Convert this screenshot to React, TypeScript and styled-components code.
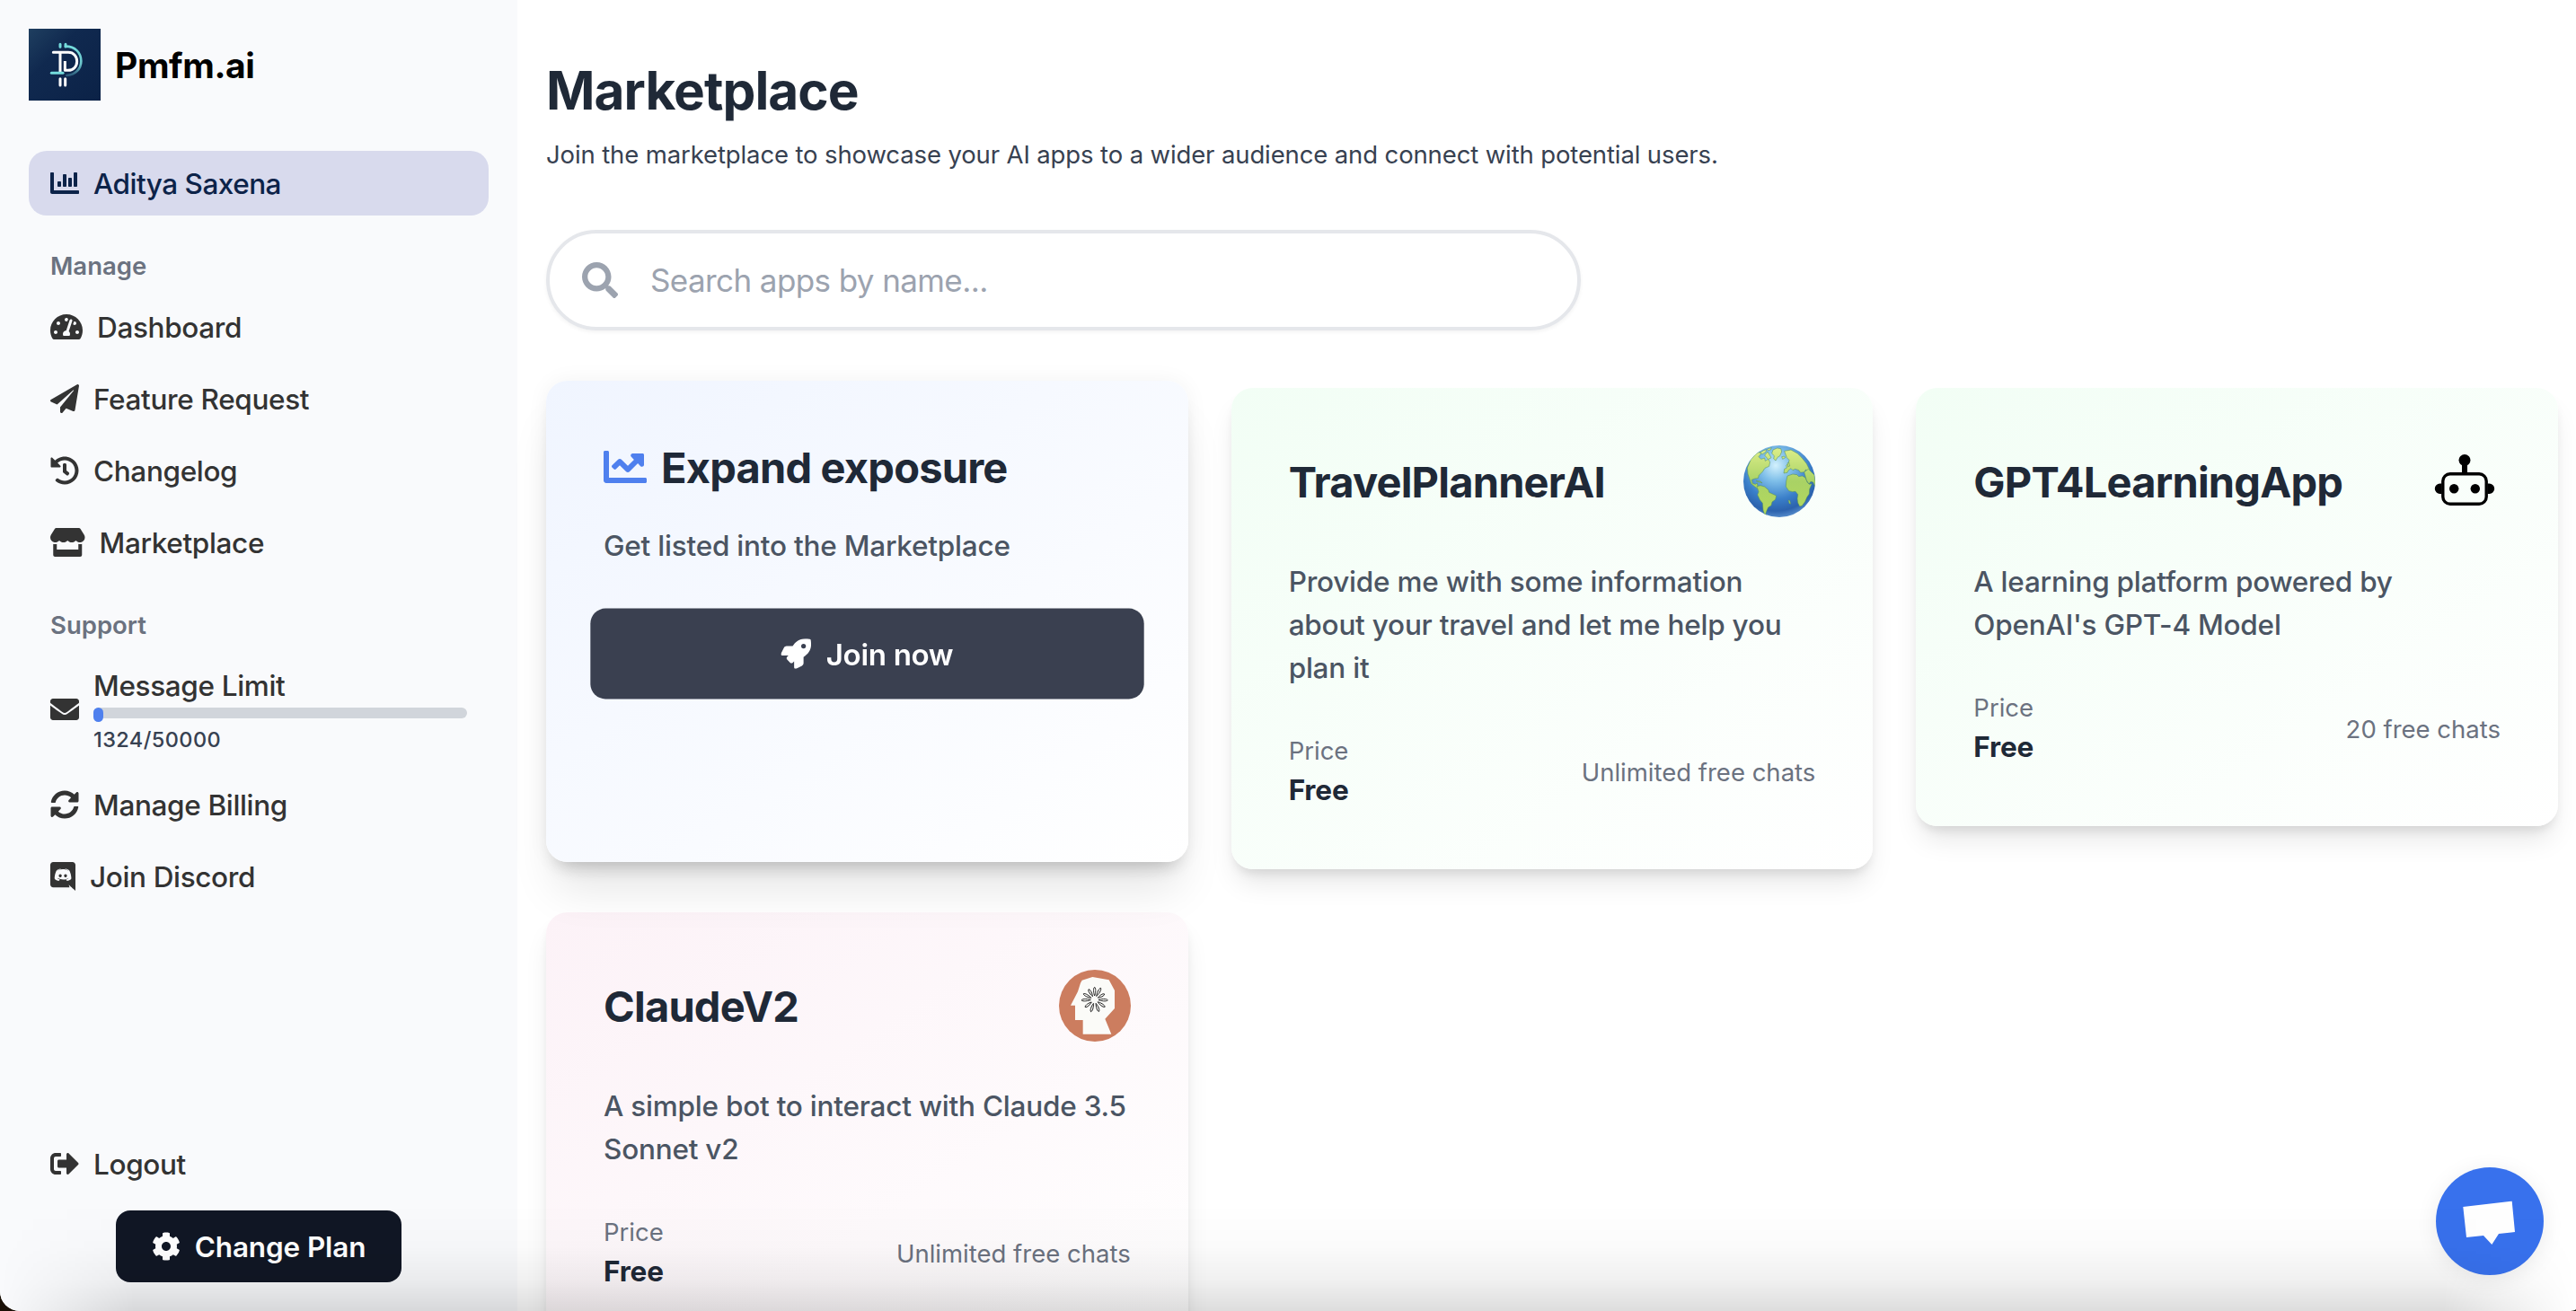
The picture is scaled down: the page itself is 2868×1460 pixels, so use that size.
import React from 'react';
import styled, { createGlobalStyle, css } from 'styled-components';
import {
  FaChartBar,
  FaChartLine,
  FaCog,
  FaEnvelope,
  FaHistory,
  FaPaperPlane,
  FaRocket,
  FaSearch,
  FaSignOutAlt,
  FaStore,
  FaSyncAlt,
  FaTachometerAlt,
} from 'react-icons/fa';

const GlobalStyle = createGlobalStyle`
  * {
    box-sizing: border-box;
  }
  body {
    margin: 0;
    background: #1a1006;
    font-family: Inter, 'Liberation Sans', sans-serif;
    -webkit-font-smoothing: antialiased;
  }
  h1, h2, p {
    margin: 0;
  }
  svg {
    display: block;
    flex-shrink: 0;
  }
`;

const Window = styled.div`
  position: relative;
  display: flex;
  width: 2868px;
  height: 1460px;
  overflow: hidden;
  background: #fff;
  border-radius: 0 0 10px 22px / 0 0 2px 22px;
`;

const Sidebar = styled.aside`
  display: flex;
  flex-direction: column;
  width: 576px;
  flex-shrink: 0;
  padding: 32px;
  background: #f9fafc;
`;

const Brand = styled.div`
  display: flex;
  align-items: center;
  gap: 16px;
  height: 80px;
  margin-bottom: 56px;
`;

const BrandName = styled.p`
  font-size: 39px;
  font-weight: 700;
  letter-spacing: -0.01em;
  color: #000;
`;

const itemText = css`
  font-size: 31.5px;
  font-weight: 500;
  letter-spacing: -0.011em;
`;

const Account = styled.div`
  display: flex;
  align-items: center;
  gap: 16px;
  height: 72px;
  padding: 0 24px;
  border-radius: 20px;
  background: #d8daed;
  color: #0c2349;
  ${itemText}
  letter-spacing: -0.016em;
`;

const GroupLabel = styled.p<{ $top: number }>`
  height: 40px;
  margin-top: ${(props) => props.$top}px;
  margin-bottom: 8px;
  padding-left: 24px;
  line-height: 40px;
  font-size: 27.5px;
  font-weight: 600;
  color: #6b7280;
`;

const MenuItem = styled.div<{ $height?: number }>`
  display: flex;
  align-items: center;
  gap: 16px;
  height: ${(props) => props.$height || 80}px;
  padding: 0 24px;
  color: #333;
  ${itemText}
`;

// these two glyphs are wider than they are tall
const DashboardIcon = styled(FaTachometerAlt)`
  width: 36px;
  height: 32px;
`;

const StoreIcon = styled(FaStore)`
  width: 38.5px;
  height: 32px;
`;

const Limit = styled.div`
  flex: 1;
`;

const LimitTitle = styled.p`
  line-height: 48px;
`;

const Track = styled.div`
  height: 12px;
  margin-bottom: 8px;
  border-radius: 6px;
  background: #d1d5db;
`;

const Fill = styled.div`
  height: 16px;
  border-radius: 6px;
  background: #4f80ee;
`;

const LimitCount = styled.p`
  line-height: 32px;
  font-size: 23.5px;
  letter-spacing: 0.018em;
  color: #374151;
`;

const SidebarFooter = styled.div`
  display: flex;
  flex-direction: column;
  margin-top: auto;
`;

const PlanButton = styled.button`
  display: flex;
  align-items: center;
  align-self: center;
  justify-content: center;
  gap: 16px;
  width: 318px;
  height: 80px;
  margin-top: 12px;
  border: 0;
  border-radius: 16px;
  background: #111725;
  color: #fff;
  font-family: inherit;
  font-size: 31.5px;
  font-weight: 600;
  letter-spacing: -0.004em;
  white-space: nowrap;
`;

const Main = styled.main`
  flex: 1;
  padding: 64px 20px 0 32px;
`;

const Title = styled.h1`
  height: 76px;
  line-height: 74px;
  font-size: 58.5px;
  font-weight: 700;
  letter-spacing: -0.016em;
  color: #1f2937;
`;

const Subtitle = styled.p`
  height: 64px;
  line-height: 64px;
  font-size: 27.5px;
  letter-spacing: -0.0045em;
  color: #374151;
`;

const SearchBox = styled.div`
  display: flex;
  align-items: center;
  gap: 36px;
  width: 1152px;
  height: 112px;
  margin: 52px 0 64px;
  padding-left: 36px;
  border: 4px solid #e5e7eb;
  border-radius: 56px;
  box-shadow: 0 2px 4px rgba(0, 0, 0, 0.05);
  color: #9ca3af;
`;

const SearchInput = styled.input`
  flex: 1;
  min-width: 0;
  padding: 0;
  border: 0;
  outline: 0;
  background: none;
  font-family: inherit;
  font-size: 35px;
  letter-spacing: -0.017em;
  &::placeholder {
    color: #9ca3af;
    opacity: 1;
  }
`;

const Grid = styled.div`
  display: grid;
  grid-template-columns: repeat(3, 1fr);
  gap: 48px;
`;

const Card = styled.section<{ $tint: string }>`
  align-self: start;
  padding: 64px;
  border-radius: 24px;
  background: linear-gradient(to bottom right, ${(props) => props.$tint}, #fff);
  box-shadow: 0 20px 30px -6px rgba(0, 0, 0, 0.1),
    0 8px 12px -4px rgba(0, 0, 0, 0.1);
`;

const PromoCard = styled(Card)`
  align-self: stretch;
  transform: translateY(-8px);
  box-shadow: 0 40px 50px -10px rgba(0, 0, 0, 0.1),
    0 16px 20px -12px rgba(0, 0, 0, 0.2), 0 0 24px rgba(0, 0, 0, 0.05);
`;

const PromoHeader = styled.div`
  display: flex;
  align-items: center;
  gap: 16px;
  height: 64px;
  margin-bottom: 32px;
  color: #4f80ee;
`;

const CardTitle = styled.h2`
  font-size: 47px;
  font-weight: 700;
  letter-spacing: -0.017em;
  white-space: nowrap;
  color: #1f2937;
`;

const Description = styled.p`
  line-height: 48px;
  font-size: 31.5px;
  font-weight: 500;
  letter-spacing: -0.007em;
  color: #4b5563;
`;

const JoinButton = styled.button`
  display: flex;
  align-items: center;
  justify-content: center;
  gap: 16px;
  width: 100%;
  height: 96px;
  margin-top: 48px;
  border: 0;
  border-radius: 16px;
  background: #3a4050;
  color: #fff;
  font-family: inherit;
  font-size: 31.5px;
  font-weight: 600;
  letter-spacing: -0.01em;
  transform: scale(1.05);
`;

const CardHeader = styled.div`
  display: flex;
  align-items: center;
  justify-content: space-between;
  height: 80px;
  margin-bottom: 48px;
`;

const CardFooter = styled.div`
  display: flex;
  align-items: center;
  justify-content: space-between;
  height: 88px;
  margin-top: 48px;
`;

const Muted = styled.p`
  line-height: 40px;
  font-size: 27.5px;
  color: #6b7280;
`;

const Price = styled.p`
  line-height: 48px;
  font-size: 31.5px;
  font-weight: 700;
  letter-spacing: -0.005em;
  color: #1f2937;
`;

const BottomShade = styled.div`
  position: absolute;
  left: 0;
  right: 0;
  bottom: 0;
  height: 120px;
  pointer-events: none;
  background: linear-gradient(
    to bottom,
    rgba(0, 0, 0, 0),
    rgba(0, 0, 0, 0.015) 40%,
    rgba(0, 0, 0, 0.06) 72%,
    rgba(0, 0, 0, 0.135)
  );
  mask-image: linear-gradient(
    to right,
    transparent,
    #000 150px,
    #000 2720px,
    transparent
  );
`;

const ChatButton = styled.button`
  position: absolute;
  right: 36px;
  bottom: 40px;
  width: 120px;
  height: 120px;
  padding: 0;
  border: 0;
  border-radius: 50%;
  background: #3871ed;
  box-shadow: 0 4px 24px rgba(0, 0, 0, 0.08);
`;

const Logo = () => (
  <svg width="80" height="80" viewBox="18 18 240 240" fill="none">
    <defs>
      <linearGradient id="logoBg" x1="0" y1="0" x2="1" y2="1">
        <stop offset="0" stopColor="#1f3f60" />
        <stop offset="0.35" stopColor="#10294f" />
        <stop offset="1" stopColor="#0b2247" />
      </linearGradient>
      <linearGradient id="logoArc" x1="0" y1="0" x2="0" y2="1">
        <stop offset="0" stopColor="#74dcdc" />
        <stop offset="0.6" stopColor="#6cc6cc" />
        <stop offset="1" stopColor="#2b5a7a" />
      </linearGradient>
    </defs>
    <rect x="18" y="18" width="240" height="240" fill="url(#logoBg)" />
    <g strokeLinecap="round" strokeWidth="9">
      <path d="M123 70v9M141 70v8" stroke="#74dcdc" />
      <path
        d="M141 77c32 0 52 21 52 49 0 27-20 46-48 48"
        stroke="url(#logoArc)"
        strokeWidth="8"
      />
      <path d="M100 97h50c18 0 29 13 29 30s-12 30-29 30h-11" stroke="#fff" />
      <path d="M123 99v63M139 126v31" stroke="#fff" strokeLinecap="butt" />
      <path d="M123 185v22M140 185v22" stroke="#fff" />
      <path d="M94 166h38" stroke="#74dcdc" />
    </g>
  </svg>
);

const DiscordIcon = () => (
  <svg width="28" height="32" viewBox="0 0 448 512" fill="currentColor">
    <path d="M297.216 243.2c0 15.616-11.52 28.416-26.112 28.416-14.336 0-26.112-12.8-26.112-28.416s11.52-28.416 26.112-28.416c14.592 0 26.112 12.8 26.112 28.416zm-119.552-28.416c-14.592 0-26.112 12.8-26.112 28.416s11.776 28.416 26.112 28.416c14.592 0 26.112-12.8 26.112-28.416.256-15.616-11.52-28.416-26.112-28.416zM448 52.736V512c-64.494-56.994-43.868-38.128-118.784-107.776l13.568 47.36H52.48C23.552 451.584 0 428.032 0 398.848V52.736C0 23.552 23.552 0 52.48 0h343.04C424.448 0 448 23.552 448 52.736zm-72.96 242.688c0-82.432-36.864-149.248-36.864-149.248-36.864-27.648-71.936-26.88-71.936-26.88l-3.584 4.096c43.52 13.312 63.744 32.512 63.744 32.512-60.811-33.329-132.244-33.335-191.232-7.424-9.472 4.352-15.104 7.424-15.104 7.424s21.248-20.224 67.328-33.536l-2.56-3.072s-35.072-.768-71.936 26.88c0 0-36.864 66.816-36.864 149.248 0 0 21.504 37.12 78.08 38.912 0 0 9.472-11.52 17.152-21.248-32.512-9.728-44.8-30.208-44.8-30.208 3.766 2.636 9.976 6.053 10.496 6.4 43.21 24.198 104.588 32.126 159.744 8.96 8.96-3.328 18.944-8.192 29.44-15.104 0 0-12.8 20.992-46.336 30.464 7.68 9.728 16.896 20.736 16.896 20.736 56.576-1.792 78.336-38.912 78.336-38.912z" />
  </svg>
);

const GlobeIcon = () => (
  <svg width="80" height="80" viewBox="33 33 240 240">
    <defs>
      <radialGradient id="ocean" cx="0.45" cy="0.28" r="0.72">
        <stop offset="0" stopColor="#d3f1fd" />
        <stop offset="0.3" stopColor="#7fbfe9" />
        <stop offset="0.65" stopColor="#3a7fc9" />
        <stop offset="0.88" stopColor="#2c62ad" />
        <stop offset="1" stopColor="#5288c8" />
      </radialGradient>
      <linearGradient id="land" x1="0" y1="33" x2="0" y2="273" gradientUnits="userSpaceOnUse">
        <stop offset="0" stopColor="#e0f08c" />
        <stop offset="0.5" stopColor="#a9d265" />
        <stop offset="1" stopColor="#b5d95c" />
      </linearGradient>
      <clipPath id="globeClip">
        <circle cx="153" cy="153" r="120" />
      </clipPath>
    </defs>
    <circle cx="153" cy="153" r="120" fill="url(#ocean)" />
    <g
      clipPath="url(#globeClip)"
      fill="url(#land)"
      stroke="#4f8a5c"
      strokeWidth="1.5"
      strokeLinejoin="round"
    >
      <path d="M46 108l12-28 18-20 12-5 4 6-8 10 8 8 12-4 2 10 10-6 6 10-3 14-14 6-8 12-12 12-3 10-10 1-11 4 3 12 9 3 6-4 2 10 10 8-9 2-12-9-11-9-6-18-5-14z" />
      <path d="M88 58l12-8 10-3-2 8-11 7zM104 66l10-12 6 10 6 10-10 6zM113 45l14-4-4 7-8 2z" />
      <path d="M132 48l14-6 12 2 3 10-6 14-8 5-6 11-7-6 2-10-8-8z" />
      <path d="M161 71l9-2 3 5-9 5z" />
      <path d="M78 170l12-3 14 4 13 11 2 8 24 11-3 13-11 8-3 12-10 6-5 11-4 11 7 8-9-4-6-16-2-24-9-11-8-17 4-10z" />
      <path d="M76 151l14 2 6 6-8-3-12-3z" />
      <path d="M170 52l22-4 22 12 14 14 16 20 12 24-6 4-8-8-6 8-12 2-6-8-12-4-8 4-6-6-8 6-4 8-12 2 2-14 8-4-2-8 8-8 2-10-8-8z" />
      <path d="M180 92l5-2 3 12-6 2z" />
      <path d="M180 135l18-6 14 2 6 6 12-2 10 6 6 14 7 8 9-2-8 18-1 16-8 12-6 14-10 14-8 2-6-12-2-14 2-14-8-10-10 1-12-3-10-14 1-18z" />
      <path d="M236 122l14-10 20 20 5 30-3 8-6-14-8-2-6 8-8-12z" />
      <path d="M183 216l5 1 3 12-5-2z" />
    </g>
  </svg>
);

const RobotIcon = () => (
  <svg width="80" height="80" viewBox="0 0 80 80">
    <circle cx="40" cy="16.5" r="6.5" />
    <rect x="37" y="18" width="6" height="14" />
    <rect x="15.8" y="31.8" width="48.4" height="33.4" rx="8" fill="none" stroke="#000" strokeWidth="3.4" />
    <circle cx="28.2" cy="48.2" r="5.2" />
    <circle cx="51.8" cy="48.2" r="5.2" />
    <path d="M14.5 42.5h-2a5.7 5.7 0 0 0 0 11.4h2zM65.5 42.5h2a5.7 5.7 0 0 1 0 11.4h-2z" />
  </svg>
);

// petal angle and length around the centre of the head
const PETALS = [
  [0, 42],
  [28, 44],
  [60, 38],
  [92, 44],
  [125, 42],
  [160, 42],
  [197, 42],
  [232, 40],
  [268, 44],
  [298, 42],
  [330, 40],
];

const HeadIcon = () => (
  <svg width="80" height="80" viewBox="33 36 240 240">
    <circle cx="153" cy="156" r="120" fill="#cc7d5f" />
    <path
      d="M110 71l35-11 55 10 19 35v60l-32 35 21 51h-95v-47H87v-49H72l24-46 9-29z"
      fill="#fbfbf8"
    />
    <g fill="none" stroke="#111" strokeWidth="2.6">
      {PETALS.map(([angle, length]) => (
        <path
          key={angle}
          d={`M0 -13C-3 -20 -6 ${4 - length} 0 ${-length}C6 ${4 - length} 3 -20 0 -13Z`}
          transform={`translate(152 136) rotate(${angle})`}
        />
      ))}
    </g>
  </svg>
);

const MANAGE = [
  { label: 'Dashboard', icon: <DashboardIcon /> },
  { label: 'Feature Request', icon: <FaPaperPlane size={32} /> },
  { label: 'Changelog', icon: <FaHistory size={32} /> },
  { label: 'Marketplace', icon: <StoreIcon /> },
];

interface AppItem {
  name: string;
  description: string;
  chats: string;
  tint: string;
  icon: React.ReactNode;
}

const APPS: AppItem[] = [
  {
    name: 'TravelPlannerAI',
    description:
      'Provide me with some information about your travel and let me help you plan it',
    chats: 'Unlimited free chats',
    tint: '#f2fef5',
    icon: <GlobeIcon />,
  },
  {
    name: 'GPT4LearningApp',
    description: "A learning platform powered by OpenAI's GPT-4 Model",
    chats: '20 free chats',
    tint: '#f2fef5',
    icon: <RobotIcon />,
  },
  {
    name: 'ClaudeV2',
    description: 'A simple bot to interact with Claude 3.5 Sonnet v2',
    chats: 'Unlimited free chats',
    tint: '#fcf2f7',
    icon: <HeadIcon />,
  },
];

const used = 1324;
const total = 50000;

const App = () => {
  return (
    <>
      <GlobalStyle />
      <Window>
        <Sidebar>
          <Brand>
            <Logo />
            <BrandName>Pmfm.ai</BrandName>
          </Brand>
          <Account>
            <FaChartBar size={32} />
            Aditya Saxena
          </Account>
          <GroupLabel $top={36}>Manage</GroupLabel>
          {MANAGE.map((item) => (
            <MenuItem key={item.label}>
              {item.icon}
              {item.label}
            </MenuItem>
          ))}
          <GroupLabel $top={32}>Support</GroupLabel>
          <MenuItem $height={132}>
            <FaEnvelope size={32} />
            <Limit>
              <LimitTitle>Message Limit</LimitTitle>
              <Track>
                <Fill style={{ width: `${(used / total) * 100}%` }} />
              </Track>
              <LimitCount>
                {used}/{total}
              </LimitCount>
            </Limit>
          </MenuItem>
          <MenuItem>
            <FaSyncAlt size={32} />
            Manage Billing
          </MenuItem>
          <MenuItem>
            <DiscordIcon />
            Join Discord
          </MenuItem>
          <SidebarFooter>
            <MenuItem>
              <FaSignOutAlt size={32} />
              Logout
            </MenuItem>
            <PlanButton>
              <FaCog size={32} />
              Change Plan
            </PlanButton>
          </SidebarFooter>
        </Sidebar>
        <Main>
          <Title>Marketplace</Title>
          <Subtitle>
            Join the marketplace to showcase your AI apps to a wider audience and
            connect with potential users.
          </Subtitle>
          <SearchBox>
            <FaSearch size={40} />
            <SearchInput placeholder="Search apps by name..." />
          </SearchBox>
          <Grid>
            <PromoCard $tint="#f0f5ff">
              <PromoHeader>
                <FaChartLine size={48} />
                <CardTitle>Expand exposure</CardTitle>
              </PromoHeader>
              <Description>Get listed into the Marketplace</Description>
              <JoinButton>
                <FaRocket size={32} />
                Join now
              </JoinButton>
            </PromoCard>
            {APPS.map((app) => (
              <Card key={app.name} $tint={app.tint}>
                <CardHeader>
                  <CardTitle>{app.name}</CardTitle>
                  {app.icon}
                </CardHeader>
                <Description>{app.description}</Description>
                <CardFooter>
                  <div>
                    <Muted>Price</Muted>
                    <Price>Free</Price>
                  </div>
                  <Muted>{app.chats}</Muted>
                </CardFooter>
              </Card>
            ))}
          </Grid>
        </Main>
        <ChatButton>
          <svg width="120" height="120" viewBox="0 0 120 120" fill="#fff">
            <path d="M30.3 44L84.7 37.7 88 72 70 74 62.3 86 53 76 34 78z" />
          </svg>
        </ChatButton>
        <BottomShade />
      </Window>
    </>
  );
};

export default App;
